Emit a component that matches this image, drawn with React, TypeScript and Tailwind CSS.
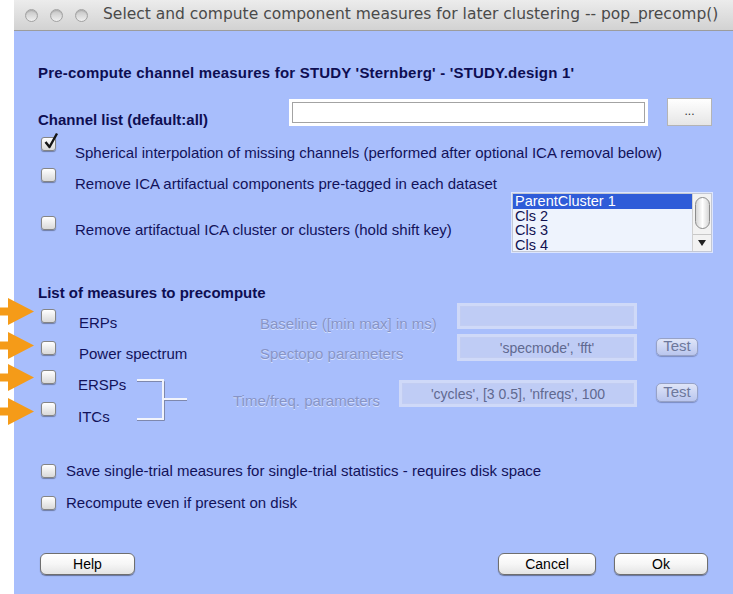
import React from "react";

const ink = "text-[#12125a]";
const sans = "font-['Liberation_Sans',Arial,sans-serif]";

function Box({ checked }: { checked?: boolean }) {
  return (
    <span className="relative block w-[15px] h-[14px] rounded-[3px] border border-[#858585] bg-gradient-to-b from-white to-[#d9d9d9] shadow-[0_1px_1px_rgba(0,0,0,0.35)]">
      {checked && (
        <svg className="absolute left-[1px] top-[-6px]" width="16" height="18" viewBox="0 0 16 18">
          <path d="M2.5 10 L6.5 15 L14 1.5" stroke="#151515" strokeWidth="2.4" fill="none" strokeLinejoin="round" />
        </svg>
      )}
    </span>
  );
}

function Arrow({ className }: { className: string }) {
  return (
    <svg className={className} width="34" height="27" viewBox="0 0 34 27">
      <rect x="0" y="9.5" width="10" height="8" fill="#f59b18" />
      <path d="M8 0 L34 13.5 L8 27 Z" fill="#f59b18" />
    </svg>
  );
}

function DisabledField({ w, h, text }: { w: string; h: string; text?: string }) {
  return (
    <div className={`${w} ${h} shrink-0 bg-[#cfd9f8] p-[3px]`}>
      <div className="h-full border border-[#c2cdf2] bg-[#bfccf5] flex items-center justify-center text-[14px] text-[#5f6990] leading-none">
        {text}
      </div>
    </div>
  );
}

function TestButton({ h, mt }: { h: string; mt: string }) {
  return (
    <div
      className={`ml-[19px] ${mt} ${h} w-[42px] shrink-0 rounded-[5px] border border-[#97a2c6] bg-gradient-to-b from-[#dfe5f8] to-[#bac6ee] shadow-[0_1px_1px_rgba(40,50,90,0.35)] flex items-center justify-center text-[15px] text-[#6d789c] leading-none pb-[3px]`}
    >
      Test
    </div>
  );
}

function Dim({ children, className = "" }: { children: React.ReactNode; className?: string }) {
  return (
    <div
      className={`text-[15px] leading-[16px] text-[#8794c6] [text-shadow:0_1px_0_rgba(255,255,255,0.55)] whitespace-nowrap ${className}`}
    >
      {children}
    </div>
  );
}

function PushButton({ label, w }: { label: string; w: string }) {
  return (
    <div
      className={`${w} h-[22px] rounded-[6px] border border-[#6f6f6f] bg-gradient-to-b from-white via-[#f6f6f6] to-[#e4e4e4] shadow-[0_1px_1px_rgba(0,0,0,0.4)] flex items-center justify-center text-[14px] text-black leading-none`}
    >
      {label}
    </div>
  );
}

export default function App() {
  return (
    <div className={`relative w-[733px] h-[594px] overflow-hidden bg-white flex ${sans}`}>
      <div className="ml-[14px] flex-1 flex flex-col">
        {/* title bar */}
        <div className="h-[31px] shrink-0 border-b border-[#9c9c9c] bg-gradient-to-b from-[#ececec] to-[#d2d2d2] flex items-center pl-[11px]">
          <div className="flex gap-[12px]">
            {[0, 1, 2].map((i) => (
              <span
                key={i}
                className="block w-[13px] h-[13px] rounded-full border border-[#a2a2a2] bg-gradient-to-b from-[#c4c4c4] to-[#f0f0f0] shadow-[inset_0_1px_1px_rgba(0,0,0,0.15)]"
              />
            ))}
          </div>
          <div className="ml-[15px] text-[15.5px] text-[#4a4a4a] font-['DejaVu_Sans',sans-serif] whitespace-nowrap">
            Select and compute component measures for later clustering -- pop_precomp()
          </div>
        </div>

        {/* dialog body */}
        <div className={`flex-1 bg-[#a8befc] pl-[24px] pr-[21px] flex flex-col ${ink}`}>
          <div className="mt-[32px] text-[15px] leading-[20px] font-bold tracking-[0.2px] text-[#0e0e52] whitespace-nowrap">
            Pre-compute channel measures for STUDY 'Sternberg' - 'STUDY.design 1'
          </div>

          {/* channel list */}
          <div className="mt-[15px] flex items-start">
            <div className="w-[251px] mt-[14px] text-[15px] leading-[16px] font-bold text-[#0e0e52] whitespace-nowrap">
              Channel list (default:all)
            </div>
            <div className="w-[359px] h-[27px] mt-[1px] bg-white p-[3px]">
              <div className="h-full border border-[#a3a3a3] bg-white" />
            </div>
            <div className="ml-[19px] w-[45px] h-[28px] border border-[#b4b4b4] bg-gradient-to-b from-white to-[#e6e6e6] flex items-center justify-center text-[12px] text-[#333] leading-none pb-[3px]">
              ...
            </div>
          </div>

          <div className="mt-[8px] flex items-start">
            <div className="ml-[3px] mt-[1px]">
              <Box checked />
            </div>
            <div className="ml-[19px] mt-[9px] text-[15px] leading-[16px] whitespace-nowrap">
              Spherical interpolation of missing channels (performed after optional ICA removal below)
            </div>
          </div>

          <div className="mt-[6px] flex items-start">
            <div className="ml-[3px] mt-[1px]">
              <Box />
            </div>
            <div className="ml-[19px] mt-[9px] text-[15px] leading-[16px] whitespace-nowrap">
              Remove ICA artifactual components pre-tagged in each dataset
            </div>
          </div>

          <div className="mt-[1px] flex items-start">
            <div className="ml-[3px] mt-[23px]">
              <Box />
            </div>
            <div className="ml-[19px] mt-[29px] text-[15px] leading-[16px] whitespace-nowrap">
              Remove artifactual ICA cluster or clusters (hold shift key)
            </div>
            {/* cluster list box */}
            <div className="ml-auto w-[200px] h-[59px] border border-[#c4c8d4] bg-[#eef3fd] flex shadow-[0_0_0_1px_rgba(255,255,255,0.6)]">
              <div className="flex-1 text-[14.5px] leading-[14.5px] text-[#111150] overflow-hidden">
                <div className="bg-[#2f5cd8] text-white pl-[2px]">ParentCluster 1</div>
                <div className="pl-[2px]">Cls 2</div>
                <div className="pl-[2px]">Cls 3</div>
                <div className="pl-[2px]">Cls 4</div>
              </div>
              <div className="w-[19px] border-l border-[#d0d0d0] bg-[#f2f2f2] flex flex-col items-center">
                <div className="mt-[3px] w-[15px] h-[32px] rounded-full border border-[#8c8c8c] bg-gradient-to-r from-[#d6d6d6] via-white to-[#d6d6d6]" />
                <div className="mt-auto w-full h-[17px] border-t border-[#c8c8c8] flex items-center justify-center">
                  <svg width="8" height="6" viewBox="0 0 8 6">
                    <path d="M0 0 L8 0 L4 6 Z" fill="#222" />
                  </svg>
                </div>
              </div>
            </div>
          </div>

          <div className="mt-[33px] text-[15px] leading-[16px] font-bold text-[#0e0e52] whitespace-nowrap">
            List of measures to precompute
          </div>

          {/* ERPs */}
          <div className="mt-[2px] h-[31px] flex items-start">
            <div className="w-[222px] flex items-start">
              <div className="ml-[3px] mt-[6px]">
                <Box />
              </div>
              <div className="ml-[23px] mt-[12px] text-[15px] leading-[16px]">ERPs</div>
            </div>
            <Dim className="w-[197px] mt-[13px]">Baseline ([min max] in ms)</Dim>
            <DisabledField w="w-[180px]" h="h-[26px]" />
          </div>

          {/* power spectrum */}
          <div className="h-[29px] flex items-start">
            <div className="w-[222px] flex items-start">
              <div className="ml-[3px] mt-[7px]">
                <Box />
              </div>
              <div className="ml-[23px] mt-[12px] text-[15px] leading-[16px] whitespace-nowrap">Power spectrum</div>
            </div>
            <Dim className="w-[197px] mt-[12px]">Spectopo parameters</Dim>
            <DisabledField w="w-[180px]" h="h-[27px]" text="'specmode', 'fft'" />
            <TestButton h="h-[18px]" mt="mt-[4px]" />
          </div>

          {/* ERSPs / ITCs */}
          <div className="h-[64px] flex items-start">
            <div className="w-[99px] flex flex-col">
              <div className="h-[32px] flex items-start">
                <div className="ml-[3px] mt-[7px]">
                  <Box />
                </div>
                <div className="ml-[22px] mt-[14px] text-[15px] leading-[16px]">ERSPs</div>
              </div>
              <div className="h-[32px] flex items-start">
                <div className="ml-[3px] mt-[7px]">
                  <Box />
                </div>
                <div className="ml-[22px] mt-[14px] text-[15px] leading-[16px]">ITCs</div>
              </div>
            </div>
            <svg className="mt-[16px] shrink-0" width="50" height="42" viewBox="0 0 50 42">
              <g stroke="#7e88ad" strokeWidth="1" fill="none">
                <path d="M0 2.5 H27.5 V41.5 H0" />
                <path d="M27.5 21.5 H50" />
              </g>
              <g stroke="#f2f4fb" strokeWidth="2" fill="none">
                <path d="M0 1 H26 V40 H0" />
                <path d="M26 20 H50" />
              </g>
            </svg>
            <Dim className="ml-[46px] w-[166px] mt-[30px]">Time/freq. parameters</Dim>
            <div className="mt-[17px]">
              <DisabledField w="w-[238px]" h="h-[27px]" text="'cycles', [3 0.5], 'nfreqs', 100" />
            </div>
            <TestButton h="h-[19px]" mt="mt-[20px]" />
          </div>

          <div className="mt-[36px] flex items-start">
            <div className="ml-[3px] mt-[1px]">
              <Box />
            </div>
            <div className="ml-[10px] mt-[0px] text-[15px] leading-[16px] whitespace-nowrap">
              Save single-trial measures for single-trial statistics - requires disk space
            </div>
          </div>

          <div className="mt-[16px] flex items-start">
            <div className="ml-[3px] mt-[1px]">
              <Box />
            </div>
            <div className="ml-[10px] mt-[0px] text-[15px] leading-[16px] whitespace-nowrap">Recompute even if present on disk</div>
          </div>

          <div className="mt-[42px] flex items-start">
            <div className="ml-[2px]">
              <PushButton label="Help" w="w-[95px]" />
            </div>
            <div className="ml-auto mr-[4px] flex gap-[18px]">
              <PushButton label="Cancel" w="w-[98px]" />
              <PushButton label="Ok" w="w-[94px]" />
            </div>
          </div>
        </div>
      </div>

      {/* orange markers beside the measure rows */}
      <Arrow className="absolute left-0 top-[298px]" />
      <Arrow className="absolute left-0 top-[332px]" />
      <Arrow className="absolute left-0 top-[364px]" />
      <Arrow className="absolute left-0 top-[398px]" />
    </div>
  );
}
